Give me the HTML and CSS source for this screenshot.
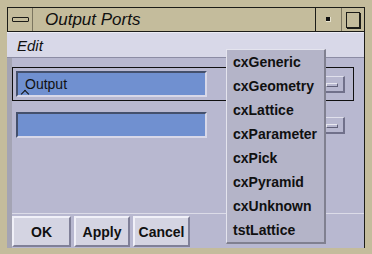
FILE: index.html
```html
<!DOCTYPE html>
<html>
<head>
<meta charset="utf-8">
<link rel="stylesheet" href="styles.css">
</head>
<body>
<div class="frame">
  <div class="window">
    <div class="titlebar">
      <div class="tb-btn tb-menu"><span class="minus"></span></div>
      <div class="tb-title">Output Ports</div>
      <div class="tb-btn tb-min"><span class="dot"></span></div>
      <div class="tb-btn tb-max"><span class="sq"></span></div>
    </div>
    <div class="menubar"><span class="menu-item">Edit</span></div>
    <div class="content">
      <div class="rows">
        <div class="row focused">
          <div class="field"><span class="caret"></span>Output</div>
          <div class="opt"><span class="optbar"></span></div>
        </div>
        <div class="row">
          <div class="field"></div>
          <div class="opt"><span class="optbar"></span></div>
        </div>
      </div>
      <div class="buttons">
        <button class="btn">OK</button>
        <button class="btn">Apply</button>
        <button class="btn">Cancel</button>
      </div>
    </div>
  </div>
  <ul class="popup">
    <li>cxGeneric</li>
    <li>cxGeometry</li>
    <li>cxLattice</li>
    <li>cxParameter</li>
    <li>cxPick</li>
    <li>cxPyramid</li>
    <li>cxUnknown</li>
    <li>tstLattice</li>
  </ul>
</div>
</body>
</html>
```
FILE: styles.css
```css
html, body {
  margin: 0;
  padding: 0;
  width: 372px;
  height: 254px;
  overflow: hidden;
}
body {
  background: #c4bc9c;
  font-family: "Liberation Sans", Arial, sans-serif;
}
.frame {
  position: relative;
  width: 372px;
  height: 254px;
  box-sizing: border-box;
  padding: 7px 7px 6px 7px;
}
.window {
  height: 241px;
  display: flex;
  flex-direction: column;
  background: #b8b8d0;
  border-right: 1px solid #1c1c18;
}
.titlebar {
  height: 25px;
  box-sizing: border-box;
  display: flex;
  border: 1px solid #1c1c18;
  border-right: none;
  background: #c4bc9c;
}
.tb-btn {
  display: flex;
  align-items: center;
  justify-content: center;
  box-sizing: border-box;
}
.tb-menu {
  width: 25px;
  border-right: 1px solid #7c7660;
}
.minus {
  width: 15px;
  height: 3px;
  border: 1px solid #1c1c18;
  background: #c4bc9c;
  border-radius: 1px;
}
.tb-title {
  flex: 1;
  font-style: italic;
  font-size: 17px;
  line-height: 23px;
  padding-left: 12px;
  color: #101010;
}
.tb-min {
  width: 27px;
  border-left: 1px solid #1c1c18;
  border-right: 1px solid #7c7660;
}
.dot {
  width: 4px;
  height: 4px;
  background: #101010;
  border: 1px solid #e8e4d0;
  border-width: 0 1px 1px 0;
}
.tb-max {
  width: 22px;
}
.sq {
  width: 12px;
  height: 14px;
  border: 1px solid #1c1c18;
  box-shadow: 1px 1px 0 #1c1c18;
}
.menubar {
  height: 26px;
  box-sizing: border-box;
  background: #d8d8e8;
  border-top: 1px solid #ececf4;
  border-bottom: 1px solid #8c8ca4;
  padding-left: 10px;
  display: flex;
  align-items: center;
}
.menu-item {
  font-style: italic;
  font-size: 15px;
  color: #101010;
}
.content {
  flex: 1;
  display: flex;
  flex-direction: column;
  justify-content: space-between;
  border-left: 5px solid #a4a4b4;
}
.rows {
  padding: 9px 10px 0 0;
  display: flex;
  flex-direction: column;
  gap: 7px;
}
.row {
  height: 34px;
  box-sizing: border-box;
  display: flex;
  align-items: center;
  padding: 0 8px 0 3px;
  border: 1px solid transparent;
}
.row.focused {
  border-color: #101010;
}
.field {
  width: 191px;
  height: 26px;
  box-sizing: border-box;
  background: #7090d0;
  border-top: 2px solid #44506c;
  border-left: 2px solid #44506c;
  border-bottom: 2px solid #d8d8e8;
  border-right: 2px solid #d8d8e8;
  font-size: 14px;
  line-height: 22px;
  padding-left: 7px;
  color: #101010;
  position: relative;
}
.caret {
  position: absolute;
  left: 4px;
  top: 18px;
  width: 5px;
  height: 5px;
  border-left: 1px solid #101010;
  border-top: 1px solid #101010;
  transform: rotate(45deg);
}
.opt {
  margin-left: auto;
  width: 26px;
  height: 17px;
  box-sizing: border-box;
  border-top: 1px solid #e0e0ec;
  border-left: 1px solid #e0e0ec;
  border-bottom: 2px solid #70708a;
  border-right: 2px solid #70708a;
  background: #b8b8d0;
  display: flex;
  align-items: center;
  justify-content: center;
}
.optbar {
  width: 12px;
  height: 4px;
  box-sizing: border-box;
  border-top: 1px solid #e8e8f0;
  border-left: 1px solid #e8e8f0;
  border-bottom: 1px solid #606078;
  border-right: 1px solid #606078;
  margin-top: 3px;
}
.buttons {
  border-top: 1px solid #dcdce8;
  display: flex;
  gap: 3px;
  padding: 2px 0 1px 0;
}
.btn {
  height: 31px;
  box-sizing: border-box;
  background: #d4d4e2;
  border-top: 2px solid #f0f0f8;
  border-left: 2px solid #f0f0f8;
  border-bottom: 2px solid #808098;
  border-right: 2px solid #808098;
  font-family: "Liberation Sans", Arial, sans-serif;
  font-weight: bold;
  font-size: 14px;
  color: #101010;
  padding: 0;
}
.btn:nth-child(1) { width: 59px; }
.btn:nth-child(2) { width: 56px; }
.btn:nth-child(3) { width: 57px; }
.popup {
  position: absolute;
  left: 226px;
  top: 49px;
  width: 97px;
  margin: 0;
  padding: 0;
  list-style: none;
  background: #b4b4c8;
  border-top: 1px solid #e4e4ee;
  border-left: 1px solid #e4e4ee;
  border-right: 2px solid #808090;
  border-bottom: 2px solid #808090;
}
.popup li {
  height: 24px;
  line-height: 24px;
  padding-left: 6px;
  font-weight: bold;
  font-size: 14px;
  color: #101010;
}
```
